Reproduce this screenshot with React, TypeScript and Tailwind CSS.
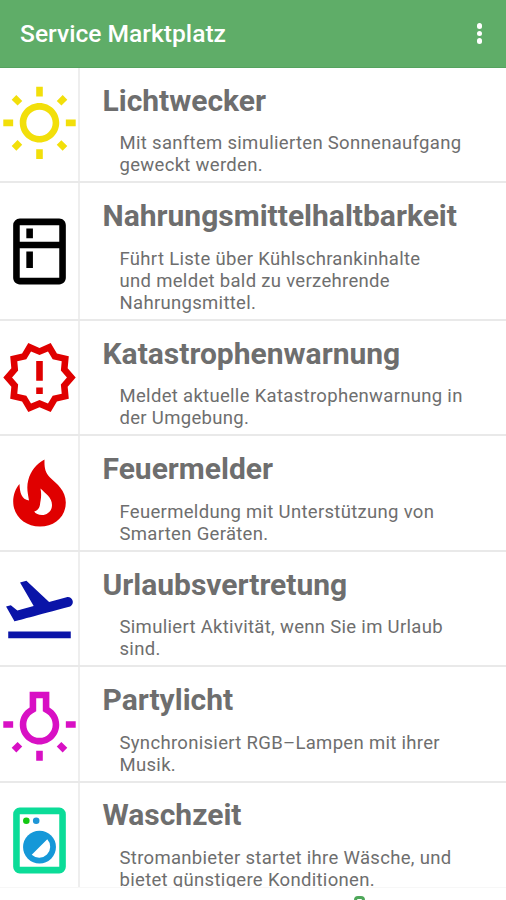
import type { ReactNode } from 'react';
import {
  MdOutlineWbSunny,
  MdOutlineKitchen,
  MdOutlineNewReleases,
  MdFlightTakeoff,
  MdOutlineWbIncandescent,
} from 'react-icons/md';

const FlameIcon = () => (
  <svg viewBox="0 -1 79 79" className="size-[79px] fill-[#e00000]">
    <path
      fillRule="evenodd"
      d="M44.5 4.500C44.300 13 45 17.500 50 22.500C57 29 65.800 35.500 65.800 47.500C65.800 62 54.500 71.500 40 71.500C25 71.500 13.200 61 13.200 46.500C13.200 40 15.500 33.500 19.500 29C19.800 37.500 21.500 44.500 29 45.500C27.800 38 26.300 32.500 28.300 25C30.500 16 36.500 9 44.500 4.500ZM40.500 33.500C42 41 40.500 45.500 40 49.500C39.500 53 37.500 55.500 34.200 56.500C35.500 58.800 38.500 60 42 60C47.500 60 52 56 52 50C52 42.500 45.500 38.500 40.500 33.500Z"
    />
  </svg>
);

const WasherIcon = () => (
  <svg viewBox="0 0 24 24" className="size-[79px]">
    <rect x="5" y="3" width="14" height="18" rx="1" fill="none" stroke="#0bdc98" strokeWidth="2" />
    <circle cx="8" cy="6" r="1" fill="#12c812" />
    <circle cx="11" cy="6" r="1" fill="#1e96d6" />
    <circle cx="12" cy="14" r="5" fill="#1598d8" />
    <path d="M14.36 11.640a3.340 3.340 0 0 1-4.720 4.720z" fill="#fff" />
  </svg>
);

type Service = { title: string; lines: string[]; height: string; spacing: string; icon: ReactNode };

const services: Service[] = [
  {
    title: 'Lichtwecker',
    lines: ['Mit sanftem simulierten Sonnenaufgang', 'geweckt werden.'],
    height: 'h-[115px]',
    spacing: 'pt-[15px] gap-[13px]',
    icon: <MdOutlineWbSunny className="size-[79px] text-[#f2df0a]" />,
  },
  {
    title: 'Nahrungsmittelhaltbarkeit',
    lines: ['Führt Liste über Kühlschrankinhalte', 'und meldet bald zu verzehrende', 'Nahrungsmittel.'],
    height: 'h-[138px]',
    spacing: 'pt-[15px] gap-[14px]',
    icon: <MdOutlineKitchen className="size-[79px] text-black" />,
  },
  {
    title: 'Katastrophenwarnung',
    lines: ['Meldet aktuelle Katastrophenwarnung in', 'der Umgebung.'],
    height: 'h-[115px]',
    spacing: 'pt-[15px] gap-[13px]',
    icon: <MdOutlineNewReleases className="size-[79px] text-[#e00000]" />,
  },
  {
    title: 'Feuermelder',
    lines: ['Feuermeldung mit Unterstützung von', 'Smarten Geräten.'],
    height: 'h-[116px]',
    spacing: 'pt-[15px] gap-[14px]',
    icon: <FlameIcon />,
  },
  {
    title: 'Urlaubsvertretung',
    lines: ['Simuliert Aktivität, wenn Sie im Urlaub', 'sind.'],
    height: 'h-[115px]',
    spacing: 'pt-[15px] gap-[13px]',
    icon: <MdFlightTakeoff className="size-[79px] text-[#0a14a8]" />,
  },
  {
    title: 'Partylicht',
    lines: ['Synchronisiert RGB–Lampen mit ihrer', 'Musik.'],
    height: 'h-[116px]',
    spacing: 'pt-[15px] gap-[14px]',
    icon: <MdOutlineWbIncandescent className="size-[79px] text-[#d810c4]" />,
  },
  {
    title: 'Waschzeit',
    lines: ['Stromanbieter startet ihre Wäsche, und', 'bietet günstigere Konditionen.'],
    height: 'h-[116px]',
    spacing: 'pt-[14px] gap-[14px]',
    icon: <WasherIcon />,
  },
];

const ServiceRow = ({ title, lines, height, spacing, icon }: Service) => (
  <li className={`flex shrink-0 border-b-2 border-[#e9e9e9] ${height}`}>
    <div className="flex w-[80px] shrink-0 items-center border-r-2 border-[#eeeeee]">
      <div className="w-[79px] shrink-0">{icon}</div>
    </div>
    <div className={`flex min-w-0 flex-col pl-[22.500px] whitespace-nowrap text-[#6e6e6e] ${spacing}`}>
      <h2 className="text-[30px] leading-[36px] font-bold">{title}</h2>
      <p className="pl-[17px] text-[18.500px] leading-[22px] tracking-[0.310px]">
        {lines.map((line) => (
          <span key={line} className="block">{line}</span>
        ))}
      </p>
    </div>
  </li>
);

export default function App() {
  return (
    <div className="flex h-[900px] w-[506px] flex-col overflow-hidden bg-white font-['Roboto',sans-serif]">
      <header className="flex h-[68px] shrink-0 items-center justify-between border-b border-[#55a35f] bg-[#5fad68] pr-[24px] pl-[20px] text-white">
        <h1 className="pt-px text-[24.600px] leading-[28px] font-medium">Service Marktplatz</h1>
        <div className="flex flex-col gap-[2px]">
          <span className="size-[5.500px] rounded-full bg-white" />
          <span className="size-[5.500px] rounded-full bg-white" />
          <span className="size-[5.500px] rounded-full bg-white" />
        </div>
      </header>
      <ul className="flex min-h-0 flex-1 flex-col overflow-hidden">
        {services.map((service) => (
          <ServiceRow key={service.title} {...service} />
        ))}
      </ul>
      <nav className="flex h-[13px] shrink-0 items-start overflow-hidden border-t border-[#f7f7f7] bg-white pt-[8px] pl-[354px]">
        <span className="h-[14px] w-[11px] shrink-0 rounded-[4px] border-3 border-[#4fa75a]" />
      </nav>
    </div>
  );
}
